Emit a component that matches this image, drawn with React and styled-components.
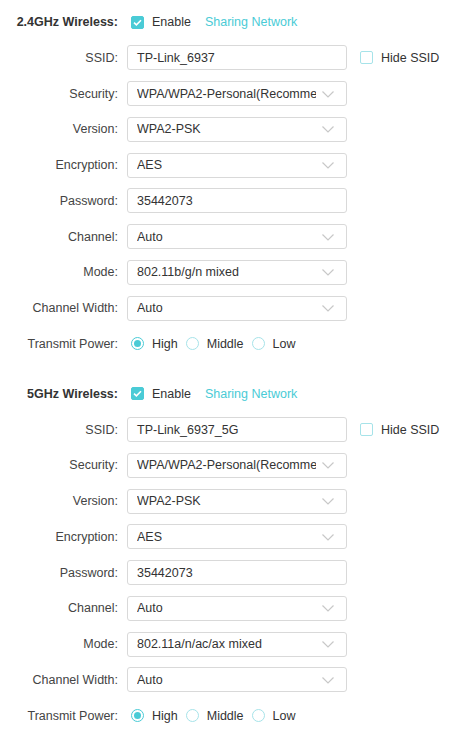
import React from 'react';
import styled, { createGlobalStyle } from 'styled-components';

const GlobalStyle = createGlobalStyle`
  html, body {
    margin: 0;
    padding: 0;
    background: #fff;
  }
  body {
    font-family: "Liberation Sans", Arial, sans-serif;
    font-size: 12.5px;
    color: #333;
  }
`;

const Page = styled.div`
  width: 455px;
  height: 734px;
  display: flex;
  flex-direction: column;
  padding-top: 9px;
  box-sizing: border-box;
  overflow: hidden;
`;

const Section = styled.div`
  display: flex;
  flex-direction: column;
  gap: 9.75px;
  margin-bottom: 24px;
`;

const Row = styled.div`
  display: flex;
  align-items: center;
  height: 26px;
`;

const Label = styled.div`
  width: 118px;
  text-align: right;
  white-space: nowrap;
  font-weight: ${(p) => (p.$bold ? 'bold' : 'normal')};
  color: ${(p) => (p.$bold ? '#333' : '#444')};
`;

const Field = styled.div`
  margin-left: 9px;
  display: flex;
  align-items: center;
`;

const Box = styled.div`
  width: 220px;
  height: 25px;
  box-sizing: border-box;
  border: 1px solid #d9d9d9;
  border-radius: 3px;
  padding: 0 30px 0 9px;
  display: flex;
  align-items: center;
  position: relative;
  color: #333;
  white-space: nowrap;
  overflow: hidden;
`;

const BoxText = styled.span`
  overflow: hidden;
  white-space: nowrap;
  text-overflow: clip;
`;

const Chevron = styled.svg`
  position: absolute;
  right: 12px;
  top: 50%;
  margin-top: -3px;
`;

const CheckBox = styled.span`
  width: 13px;
  height: 13px;
  box-sizing: border-box;
  border-radius: 2px;
  display: inline-flex;
  align-items: center;
  justify-content: center;
  background: ${(p) => (p.$checked ? '#4acbd6' : '#fff')};
  border: 1px solid ${(p) => (p.$checked ? '#4acbd6' : '#a6e3e9')};
  flex-shrink: 0;
`;

const Option = styled.label`
  display: inline-flex;
  align-items: center;
  gap: 8px;
  color: #333;
  margin-left: ${(p) => p.$ml || 0}px;
  margin-right: ${(p) => p.$mr || 0}px;
`;

const Link = styled.span`
  color: #4acbd6;
  margin-left: 14px;
`;

const Radio = styled.span`
  width: 13px;
  height: 13px;
  box-sizing: border-box;
  border-radius: 50%;
  border: 1.5px solid ${(p) => (p.$checked ? '#4acbd6' : '#a6e3e9')};
  display: inline-flex;
  align-items: center;
  justify-content: center;
  &::after {
    content: '';
    width: 7px;
    height: 7px;
    border-radius: 50%;
    background: ${(p) => (p.$checked ? '#4acbd6' : 'transparent')};
  }
`;

const Footer = styled.div`
  margin-top: auto;
  height: 3px;
  background: #f4f4f4;
`;

const Check = () => (
  <svg width="9" height="7" viewBox="0 0 9 7">
    <path d="M1 3.6 L3.4 5.8 L8 1.2" fill="none" stroke="#fff" strokeWidth="1.6" />
  </svg>
);

const Select = ({ value }) => (
  <Box>
    <BoxText>{value}</BoxText>
    <Chevron width="12" height="7" viewBox="0 0 12 7">
      <path d="M0.5 0.5 L6 6 L11.5 0.5" fill="none" stroke="#c8c8c8" strokeWidth="1.2" />
    </Chevron>
  </Box>
);

const Wireless = ({ band, ssid, mode }) => (
  <Section>
    <Row>
      <Label $bold>{band} Wireless:</Label>
      <Field>
        <Option $ml={4}>
          <CheckBox $checked>
            <Check />
          </CheckBox>
          Enable
        </Option>
        <Link>Sharing Network</Link>
      </Field>
    </Row>
    <Row>
      <Label>SSID:</Label>
      <Field>
        <Box>{ssid}</Box>
        <Option $ml={13}>
          <CheckBox />
          Hide SSID
        </Option>
      </Field>
    </Row>
    <Row>
      <Label>Security:</Label>
      <Field>
        <Select value="WPA/WPA2-Personal(Recommended)" />
      </Field>
    </Row>
    <Row>
      <Label>Version:</Label>
      <Field>
        <Select value="WPA2-PSK" />
      </Field>
    </Row>
    <Row>
      <Label>Encryption:</Label>
      <Field>
        <Select value="AES" />
      </Field>
    </Row>
    <Row>
      <Label>Password:</Label>
      <Field>
        <Box>35442073</Box>
      </Field>
    </Row>
    <Row>
      <Label>Channel:</Label>
      <Field>
        <Select value="Auto" />
      </Field>
    </Row>
    <Row>
      <Label>Mode:</Label>
      <Field>
        <Select value={mode} />
      </Field>
    </Row>
    <Row>
      <Label>Channel Width:</Label>
      <Field>
        <Select value="Auto" />
      </Field>
    </Row>
    <Row>
      <Label>Transmit Power:</Label>
      <Field>
        <Option $ml={4} $mr={8}>
          <Radio $checked />
          High
        </Option>
        <Option $mr={8}>
          <Radio />
          Middle
        </Option>
        <Option>
          <Radio />
          Low
        </Option>
      </Field>
    </Row>
  </Section>
);

export default function App() {
  return (
    <Page>
      <GlobalStyle />
      <Wireless band="2.4GHz" ssid="TP-Link_6937" mode="802.11b/g/n mixed" />
      <Wireless band="5GHz" ssid="TP-Link_6937_5G" mode="802.11a/n/ac/ax mixed" />
      <Footer />
    </Page>
  );
}
